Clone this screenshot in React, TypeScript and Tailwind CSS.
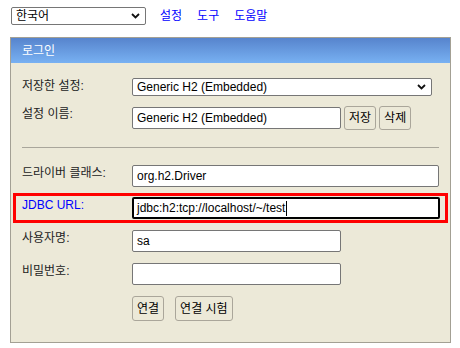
import React from "react";

const font = { fontFamily: '"Liberation Sans", "Noto Sans CJK KR", sans-serif' };

function Chevron() {
  return (
    <svg width="9" height="6" viewBox="0 0 9 6" className="shrink-0">
      <path d="M1 1 L4.5 4.5 L8 1" fill="none" stroke="#111" strokeWidth="1.8" />
    </svg>
  );
}

function FakeSelect({ value, className }: { value: string; className: string }) {
  return (
    <div
      className={`flex items-center justify-between bg-white border border-[#767676] rounded-[2px] pl-[4px] pr-[5px] text-[12px] text-black ${className}`}
    >
      <span className="leading-none">{value}</span>
      <Chevron />
    </div>
  );
}

function Field({ value, width, focused }: { value: string; width: string; focused?: boolean }) {
  return (
    <div
      className={`flex items-center bg-white rounded-[2px] px-[4px] h-[22px] text-[12px] text-black ${width} ${
        focused ? "border-2 border-black pl-[3px]" : "border border-[#767676]"
      }`}
    >
      <span className="leading-none whitespace-nowrap">{value}</span>
      {focused && <span className="w-px h-[15px] bg-black ml-[1px]" />}
    </div>
  );
}

function Btn({ children, h }: { children: React.ReactNode; h: string }) {
  return (
    <button
      className={`px-[4px] ${h} border border-[#aaa69a] rounded-[3px] bg-[#ece9d8] text-[12px] text-black leading-none`}
    >
      {children}
    </button>
  );
}

function Label({ children, blue }: { children: React.ReactNode; blue?: boolean }) {
  return (
    <div className={`w-[110px] shrink-0 text-[12px] leading-[16px] ${blue ? "text-[#0000ff]" : "text-[#222]"}`}>
      {children}
    </div>
  );
}

export default function App() {
  return (
    <div style={font} className="w-[460px] h-[348px] bg-white overflow-hidden">
      <div className="flex items-center pl-[11px] pt-[7px] h-[25px]">
        <FakeSelect value="한국어" className="w-[135px] h-[18px] pl-[3px]" />
        <div className="flex items-center text-[12px] text-[#0000ff] ml-[14px] gap-[15px]">
          <span>설정</span>
          <span>도구</span>
          <span>도움말</span>
        </div>
      </div>

      <div className="ml-[10px] mt-[12px] w-[441px] h-[306px] border border-[#a3a094] bg-[#ece9d8]">
        <div className="h-[25px] bg-gradient-to-b from-[#5784cd] to-[#78b1f2] flex items-center pl-[11px] text-white text-[12px]">
          로그인
        </div>

        <div className="px-[11px]">
          <div className="flex items-start mt-[15px]">
            <Label>저장한 설정:</Label>
            <FakeSelect value="Generic H2 (Embedded)" className="w-[300px] h-[18px]" />
          </div>

          <div className="flex items-start mt-[10px]">
            <Label>설정 이름:</Label>
            <div className="flex items-center gap-[3px]">
              <Field value="Generic H2 (Embedded)" width="w-[209px]" />
              <Btn h="h-[24px]">저장</Btn>
              <Btn h="h-[24px]">삭제</Btn>
            </div>
          </div>

          <div className="mt-[17px] h-px bg-[#a9a69b]" />

          <div className="flex items-start mt-[17px]">
            <Label>드라이버 클래스:</Label>
            <Field value="org.h2.Driver" width="w-[308px]" />
          </div>

          <div className="flex items-start mt-[6px] -mx-[9px] border-[3px] border-[#ff0000] pl-[6px] pr-[1px] py-[1px]">
            <Label blue>JDBC URL:</Label>
            <Field value="jdbc:h2:tcp://localhost/~/test" width="w-[308px]" focused />
          </div>

          <div className="flex items-start mt-[7px]">
            <Label>사용자명:</Label>
            <Field value="sa" width="w-[209px]" />
          </div>

          <div className="flex items-start mt-[11px]">
            <Label>비밀번호:</Label>
            <Field value="" width="w-[209px]" />
          </div>

          <div className="flex items-start mt-[11px]">
            <div className="w-[110px] shrink-0" />
            <div className="flex gap-[11px]">
              <Btn h="h-[25px]">연결</Btn>
              <Btn h="h-[25px]">연결 시험</Btn>
            </div>
          </div>
        </div>
      </div>
    </div>
  );
}
